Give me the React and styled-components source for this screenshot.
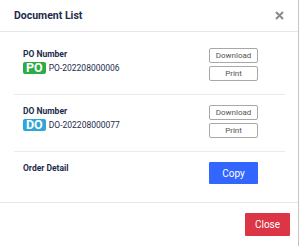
import styled, { createGlobalStyle } from 'styled-components';

const GlobalStyle = createGlobalStyle`
    html, body {
        margin: 0;
        padding: 0;
        background: #ffffff;
        font-family: Roboto, "Liberation Sans", sans-serif;
    }
`;

const Modal = styled.div`
    width: 298px;
    height: 246px;
    border-right: 1px solid #c4c4c4;
    background: #ffffff;
    display: flex;
    flex-direction: column;
    box-sizing: content-box;
`;

const Header = styled.div`
    height: 34px;
    border-bottom: 1px solid #e6e6ea;
    display: flex;
    align-items: center;
    justify-content: space-between;
    padding: 0 14px;
`;

const Title = styled.h5`
    margin: 0;
    font-size: 10.5px;
    font-weight: 700;
    color: #1e2b4c;
`;

const CloseX = styled.button`
    border: none;
    background: none;
    padding: 0;
    width: 9px;
    height: 9px;
    display: flex;
    cursor: pointer;
`;

const Body = styled.div`
    padding: 6px 13px 5px 14px;
`;

const Row = styled.div`
    display: flex;
    justify-content: space-between;
    padding: 10px 27px 13px 9px;
    border-bottom: ${(props) => (props.last ? 'none' : '1px solid #ebebef')};
`;

const Info = styled.div`
    display: flex;
    flex-direction: column;
`;

const Label = styled.div`
    font-size: 8.5px;
    font-weight: 700;
    line-height: 13px;
    color: #1e2b4c;
`;

const NumberLine = styled.div`
    display: flex;
    align-items: center;
    gap: 3px;
    margin-top: 1px;
`;

const Badge = styled.span`
    display: inline-block;
    background: ${(props) => props.color};
    color: #ffffff;
    font-size: 12.5px;
    font-weight: 700;
    line-height: 12px;
    height: 12px;
    padding: 0 3px;
    border-radius: 2px;
`;

const DocId = styled.span`
    font-size: 8.5px;
    color: #1e2b4c;
`;

const Actions = styled.div`
    display: flex;
    flex-direction: column;
    gap: 3px;
    width: 49px;
`;

const OutlineButton = styled.button`
    height: 15px;
    padding: 0;
    border: 1px solid #a8a8a8;
    border-radius: 2px;
    background: #ffffff;
    color: #555555;
    font-family: Roboto, "Liberation Sans", sans-serif;
    font-size: 8px;
    cursor: pointer;
`;

const SolidButton = styled.button`
    width: ${(props) => props.width};
    height: ${(props) => props.height};
    padding: 0;
    border: none;
    border-radius: 1px;
    background: ${(props) => props.color};
    color: #ffffff;
    font-family: Roboto, "Liberation Sans", sans-serif;
    font-size: 10px;
    cursor: pointer;
`;

const Footer = styled.div`
    border-top: 1px solid #e6e6ea;
    display: flex;
    justify-content: flex-end;
    padding: 10px 8px;
`;

const docs = [
    { label: 'PO Number', badge: 'PO', color: '#2bac47', id: 'PO-202208000006' },
    { label: 'DO Number', badge: 'DO', color: '#2ea6d6', id: 'DO-202208000077' },
];

export default function App() {
    return (
        <>
            <GlobalStyle />
            <Modal>
                <Header>
                    <Title>Document List</Title>
                    <CloseX aria-label="close">
                        <svg width="9" height="9" viewBox="0 0 9 9">
                            <path d="M1 1L8 8M8 1L1 8" stroke="#8a8a8a" strokeWidth="2" />
                        </svg>
                    </CloseX>
                </Header>
                <Body>
                    {docs.map((doc) => (
                        <Row key={doc.badge}>
                            <Info>
                                <Label>{doc.label}</Label>
                                <NumberLine>
                                    <Badge color={doc.color}>{doc.badge}</Badge>
                                    <DocId>{doc.id}</DocId>
                                </NumberLine>
                            </Info>
                            <Actions>
                                <OutlineButton>Download</OutlineButton>
                                <OutlineButton>Print</OutlineButton>
                            </Actions>
                        </Row>
                    ))}
                    <Row last>
                        <Label>Order Detail</Label>
                        <SolidButton color="#3366ff" width="49px" height="22px">Copy</SolidButton>
                    </Row>
                </Body>
                <Footer>
                    <SolidButton color="#dc3545" width="45px" height="23px">Close</SolidButton>
                </Footer>
            </Modal>
        </>
    );
}
